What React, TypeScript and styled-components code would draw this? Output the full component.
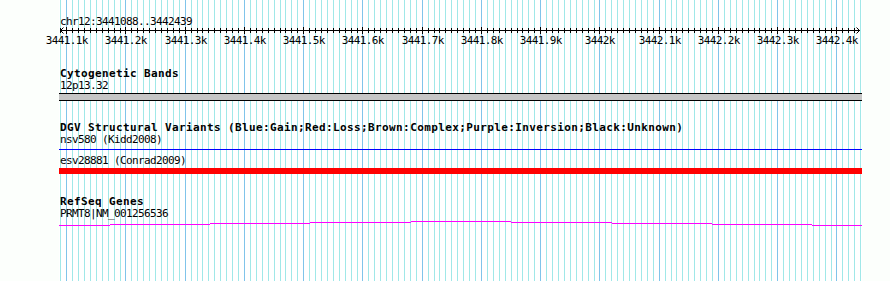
import React from "react";
import styled, { createGlobalStyle } from "styled-components";

const START = 3441088;
const END = 3442439;
const SCALE = 0.5925;
const ORIGIN = 0.6;
const WIDTH = 803;

const px = (bp: number) => Math.floor(ORIGIN + (bp - START) * SCALE);

const GlobalStyle = createGlobalStyle`
  html, body {
    margin: 0;
    padding: 0;
    background: #fcfffc;
  }
`;

const Page = styled.div`
  display: flex;
  padding-left: 59px;
  height: 281px;
  overflow: hidden;
`;

const Panel = styled.div`
  position: relative;
  isolation: isolate;
  width: ${WIDTH}px;
  height: 281px;
  background: #ffffff;
  display: flex;
  flex-direction: column;
`;

const GridLayer = styled.svg`
  position: absolute;
  inset: 0;
  z-index: 0;
`;

const Content = styled.div`
  position: relative;
  z-index: 1;
  display: flex;
  flex-direction: column;
`;

const RulerSvg = styled.svg`
  display: block;
  overflow: visible;
  font-family: "DejaVu Sans Mono", monospace;
  font-size: 11px;
  letter-spacing: -0.62px;
`;

const Track = styled.section<{ $gap: number }>`
  display: flex;
  flex-direction: column;
  margin-top: ${(p) => p.$gap}px;
`;

const TrackTitle = styled.div`
  font-family: "DejaVu Sans Mono", monospace;
  font-weight: bold;
  font-size: 11px;
  letter-spacing: 0.38px;
  line-height: 12px;
  height: 12px;
  padding-left: 1px;
  color: #000;
  white-space: nowrap;
`;

const FeatureLabel = styled.div<{ $gap?: number }>`
  font-family: "DejaVu Sans Mono", monospace;
  font-size: 11px;
  letter-spacing: -0.62px;
  line-height: 12px;
  height: 12px;
  padding-left: 1px;
  margin-top: ${(p) => p.$gap ?? 0}px;
  color: #000;
  white-space: nowrap;
`;

const Band = styled.div`
  margin-top: 1px;
  height: 6px;
  border-top: 1px solid #000;
  border-bottom: 1px solid #000;
  background: #c6c6c6;
`;

const Rule = styled.div<{ $color: string; $gap: number }>`
  margin-top: ${(p) => p.$gap}px;
  height: 1px;
  background: ${(p) => p.$color};
`;

const Bar = styled.div<{ $color: string }>`
  margin-top: 1px;
  height: 6px;
  background: ${(p) => p.$color};
`;

const HatSvg = styled.svg`
  display: block;
`;

const positions: number[] = [];
for (let bp = 3441090; bp <= 3442440; bp += 10) positions.push(bp);

function label(bp: number) {
  const k = bp / 1000;
  return `${Number.isInteger(k) ? k : k.toFixed(1)}k`;
}

function Grid() {
  return (
    <GridLayer width={WIDTH} height={281} shapeRendering="crispEdges">
      {positions.map((bp) => (
        <rect
          key={bp}
          x={px(bp)}
          y={0}
          width={1}
          height={281}
          fill={bp % 100 === 0 ? "#80c4ea" : "#a0e8e8"}
        />
      ))}
    </GridLayer>
  );
}

function Ruler() {
  const ticks = positions.filter((bp) => bp <= END);
  return (
    <RulerSvg width={WIDTH} height={50}>
      <text x={1} y={25} fill="#000">
        chr12:{START}..{END}
      </text>
      <g shapeRendering="crispEdges">
        <rect x={1} y={30} width={800} height={1} fill="#000" />
        {ticks.map((bp) =>
          bp % 100 === 0 ? (
            <rect key={bp} x={px(bp)} y={27} width={1} height={7} fill="#000" />
          ) : (
            <rect key={bp} x={px(bp)} y={28} width={1} height={5} fill="#000" />
          )
        )}
      </g>
      <path d="M4.5 27.5 L1.5 30.5 L4.5 33.5" stroke="#000" fill="none" />
      <path d="M797.5 27.5 L800.5 30.5 L797.5 33.5" stroke="#000" fill="none" />
      {ticks
        .filter((bp) => bp % 100 === 0)
        .map((bp) => (
          <text key={bp} x={px(bp) + 0.8} y={44} textAnchor="middle" fill="#000">
            {label(bp)}
          </text>
        ))}
    </RulerSvg>
  );
}

// intron "hat" connector across the whole view, drawn pixel-stepped like the original
function Hat({ color }: { color: string }) {
  const mid = WIDTH / 2;
  const segs: { x: number; w: number; y: number }[] = [];
  for (let x = 0; x < WIDTH; x++) {
    const y = 5 - Math.round(4 * (1 - Math.abs(x - mid) / mid));
    const last = segs[segs.length - 1];
    if (last && last.y === y) last.w += 1;
    else segs.push({ x, w: 1, y });
  }
  return (
    <HatSvg width={WIDTH} height={6} shapeRendering="crispEdges">
      {segs.map((s) => (
        <rect key={s.x} x={s.x} y={s.y} width={s.w} height={1} fill={color} />
      ))}
    </HatSvg>
  );
}

export default function App() {
  return (
    <>
      <GlobalStyle />
      <Page>
        <Panel>
          <Grid />
          <Content>
            <Ruler />

            <Track $gap={18}>
              <TrackTitle>Cytogenetic Bands</TrackTitle>
              <FeatureLabel>12p13.32</FeatureLabel>
              <Band />
            </Track>

            <Track $gap={21}>
              <TrackTitle>
                DGV Structural Variants
                (Blue:Gain;Red:Loss;Brown:Complex;Purple:Inversion;Black:Unknown)
              </TrackTitle>
              <FeatureLabel>nsv580 (Kidd2008)</FeatureLabel>
              <Rule $color="#0000ff" $gap={3} />
              <FeatureLabel $gap={5}>esv28881 (Conrad2009)</FeatureLabel>
              <Bar $color="#ff0000" />
            </Track>

            <Track $gap={22}>
              <TrackTitle>RefSeq Genes</TrackTitle>
              <FeatureLabel>PRMT8|NM_001256536</FeatureLabel>
              <Hat color="#ff00ff" />
            </Track>
          </Content>
        </Panel>
      </Page>
    </>
  );
}
